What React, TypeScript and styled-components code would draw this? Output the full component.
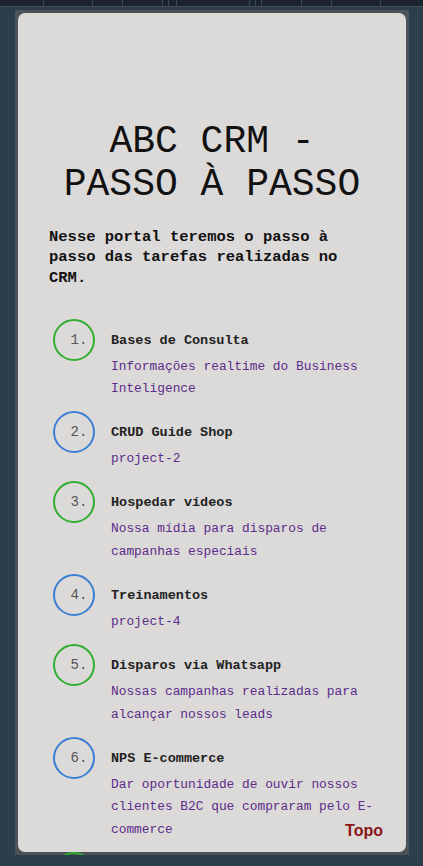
import React from "react";
import styled, { createGlobalStyle } from "styled-components";

const Global = createGlobalStyle`
  html, body { margin: 0; padding: 0; background: #2c3e4b; }
  body { font-family: "Liberation Mono", "DejaVu Sans Mono", monospace; }
  * { box-sizing: border-box; }
`;

const TopBar = styled.div`
  display: flex;
  height: 7px;
  background: #1c252e;
  border-bottom: 1px solid #3e4d59;
`;

const Seg = styled.div<{ $w: number }>`
  flex: none;
  width: ${(p) => p.$w}px;
  height: 100%;
  & + & { border-left: 1px solid #3a4753; }
`;

const Frame = styled.div`
  position: relative;
  margin: 3px 0 0 15px;
  width: 394px;
  height: 845px;
  padding: 3px;
  background: #4d5158;
  overflow: hidden;
`;

const Card = styled.main`
  height: 839px;
  padding: 107px 31px 0;
  background: #dcd9d9;
  border-radius: 7px;
`;

const Title = styled.h1`
  margin: 0;
  font-size: 38px;
  font-weight: 400;
  line-height: normal;
  text-align: center;
  color: #111;
`;

const Lead = styled.p`
  margin: 20.5px 0 0;
  font-size: 15.5px;
  font-weight: 700;
  line-height: 20.5px;
  color: #111;
`;

const List = styled.ol`
  list-style: none;
  margin: 30.5px -12px 0 4px;
  padding: 0;
  display: flex;
  flex-direction: column;
  gap: 10.5px;
`;

const Item = styled.li`
  display: flex;
  gap: 16px;
`;

const Badge = styled.div<{ $color: string }>`
  flex: none;
  width: 42px;
  height: 42px;
  border-radius: 50%;
  border: 2px solid ${(p) => p.$color};
  display: flex;
  align-items: center;
  justify-content: center;
  padding-left: 10px;
  font-size: 14px;
  color: #555;
`;

const Body = styled.div`
  flex: 1;
  min-width: 0;
`;

const ItemTitle = styled.div`
  margin-top: 12px;
  font-size: 13.5px;
  font-weight: 700;
  line-height: 20px;
  color: #222;
`;

const Desc = styled.div`
  margin-top: 5px;
  font-size: 12.85px;
  line-height: 22.6px;
  color: #5b2c8a;
`;

const Topo = styled.a`
  position: absolute;
  right: 26px;
  bottom: 15px;
  font-family: "Liberation Sans", Arial, sans-serif;
  font-size: 16px;
  font-weight: 700;
  color: #8a1515;
  text-decoration: none;
`;

const seps = [0, 43, 92, 122, 162, 168, 176, 249, 255, 261, 301, 331, 380, 423];

const items = [
  { t: "Bases de Consulta", d: "Informações realtime do Business Inteligence" },
  { t: "CRUD Guide Shop", d: "project-2" },
  { t: "Hospedar vídeos", d: "Nossa mídia para disparos de campanhas especiais" },
  { t: "Treinamentos", d: "project-4" },
  { t: "Disparos via Whatsapp", d: "Nossas campanhas realizadas para alcançar nossos leads" },
  { t: "NPS E-commerce", d: "Dar oportunidade de ouvir nossos clientes B2C que compraram pelo E-commerce" },
];

export default function App() {
  return (
    <>
      <Global />
      <TopBar>
        {seps.slice(0, -1).map((s, i) => (
          <Seg key={i} $w={seps[i + 1] - s} />
        ))}
      </TopBar>
      <Frame>
        <Card>
          <Title>ABC CRM - PASSO À PASSO</Title>
          <Lead>Nesse portal teremos o passo à passo das tarefas realizadas no CRM.</Lead>
          <List>
            {items.map((it, i) => (
              <Item key={i}>
                <Badge $color={i % 2 === 0 ? "#2fae2f" : "#3b7fd4"}>{i + 1}.</Badge>
                <Body>
                  <ItemTitle>{it.t}</ItemTitle>
                  <Desc>{it.d}</Desc>
                </Body>
              </Item>
            ))}
            <Item aria-hidden="true">
              <Badge $color="#2fae2f" />
            </Item>
          </List>
        </Card>
        <Topo href="#">Topo</Topo>
      </Frame>
    </>
  );
}
